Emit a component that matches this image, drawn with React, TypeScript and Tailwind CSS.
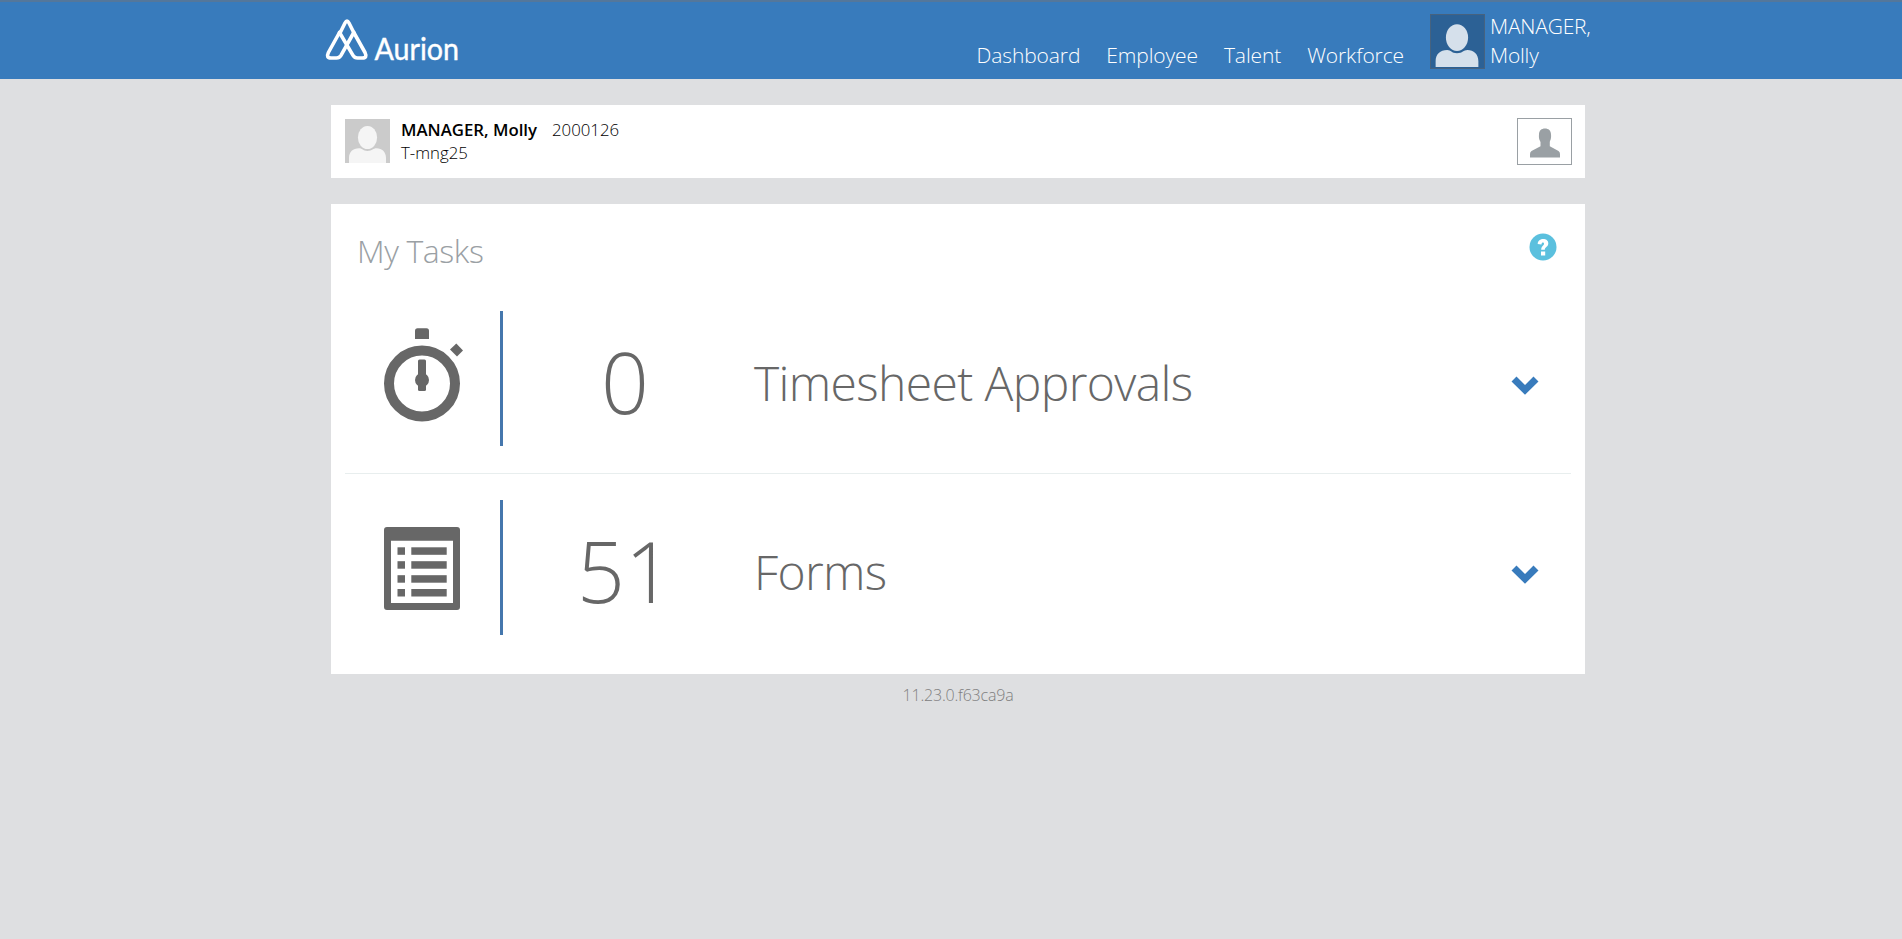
import type { ReactNode } from 'react';

function AurionLogo() {
  return (
    <svg width="142" height="58" viewBox="0 0 142 58" aria-label="Aurion">
      <g fill="none" stroke="#fff" strokeWidth="3.6" strokeLinejoin="round" strokeLinecap="round">
        <path d="M15.500 14 L20 5 Q22 1.200 24 5 L28.500 14" />
        <path d="M14.500 14.500 L3.400 34.500 Q0.800 40 6 40 H11.500 Q14.400 40 16 37.300 L28.800 14.500" />
        <path d="M28.800 14.500 L40 34.500 Q42.600 40 37.400 40 H32.500 Q29.600 40 28 37.300 L14.500 14.500" />
      </g>
      <text x="49.500" y="41.500" fill="#fff" stroke="#fff" strokeWidth="0.4" fontSize="31" textLength="84.500" lengthAdjust="spacingAndGlyphs" className="font-[Lato,sans-serif] font-normal tracking-normal">
        Aurion
      </text>
    </svg>
  );
}

function Silhouette({ size, fill }: { size: number; fill: string }) {
  return (
    <svg width={size} height={size} viewBox="0 0 45 45" fill={fill} className="shrink-0">
      <ellipse cx="22.500" cy="19.500" rx="9.600" ry="11.600" />
      <path d="M4 45 V40 C4 34 8 30.300 14 30.300 C17.500 30.300 17.500 33 22.500 33 S28 30.300 31.500 30.300 C37 30.300 41 34 41 40 V45 Z" />
    </svg>
  );
}

function StopwatchIcon() {
  return (
    <svg width="80" height="94" viewBox="0 0 80 94" fill="#676767">
      <path d="M31 11 V3 Q31 0.300 33.500 0.300 H42.500 Q45 0.300 45 3 V11 Z" />
      <circle cx="38" cy="55.500" r="33" fill="none" stroke="#676767" strokeWidth="10" />
      <rect x="34" y="31.500" width="8" height="31.500" rx="1.500" />
      <circle cx="38" cy="52" r="7" />
      <path d="M72.300 15.500 L79 22.500 L73 28.500 L66 21.500 Z" />
    </svg>
  );
}

function FormsIcon() {
  return (
    <svg width="80" height="83" viewBox="0 0 80 83" fill="#676767">
      <path fillRule="evenodd" d="M3 0 H73 Q76 0 76 3 V80 Q76 83 73 83 H3 Q0 83 0 80 V3 Q0 0 3 0 Z M7 13.700 V76 H69 V13.700 Z" />
      {[20.3, 34.2, 48.2, 62].map((y) => (
        <g key={y}>
          <rect x="13.500" y={y} width="7.500" height="7.500" />
          <rect x="27.300" y={y} width="35.400" height="7.500" />
        </g>
      ))}
    </svg>
  );
}

function Chevron() {
  return (
    <svg width="28" height="19" viewBox="0 0 28 19" fill="#387bbc">
      <path d="M0.500 5.500 L5.500 0.500 L14 9 L22.500 0.500 L27.500 5.500 L14 18.700 Z" />
    </svg>
  );
}

function TaskRow({ icon, count, label }: { icon: ReactNode; count: string; label: string }) {
  return (
    <div className="flex h-[135px] text-[#676767]">
      <div className="flex w-[158px] border-r-[3px] border-[#4577ad] pl-[39px]">{icon}</div>
      <div className="flex w-[244px] items-center justify-center text-[84px] leading-none">
        <span className="pt-[7px]">{count}</span>
      </div>
      <div className="flex flex-1 items-center pl-[7px] text-[48px] leading-none tracking-[-0.62px]">
        <span className="pt-[8px]">{label}</span>
      </div>
      <div className="w-[60px] pt-[65px]">
        <Chevron />
      </div>
    </div>
  );
}

export default function App() {
  return (
    <div className="min-h-screen bg-[#dedfe1] font-['Open_Sans',sans-serif] font-light">
      <header className="h-[79px] border-t-2 border-[#54779b] bg-[#387bbc] text-white">
        <div className="flex h-full pl-[325px] text-[21px] leading-[29px] tracking-[-0.2px]">
          <div className="pt-[16px]">
            <AurionLogo />
          </div>
          <nav className="ml-auto flex gap-[26px] pt-[39px] tracking-[-0.1px]">
            <a>Dashboard</a>
            <a>Employee</a>
            <a>Talent</a>
            <a>Workforce</a>
          </nav>
          <div className="ml-[26px] flex w-[472px] pt-[12px]">
            <div className="flex h-[55px] w-[55px] items-end border border-[#46627f] bg-[#2c6195] pb-px">
              <Silhouette size={52} fill="#d5e0eb" />
            </div>
            <div className="ml-[5px] -mt-0.5">
              MANAGER,
              <br />
              Molly
            </div>
          </div>
        </div>
      </header>

      <main className="ml-[331px] w-[1254px]">
        <section className="mt-[26px] flex h-[73px] bg-white pl-[14px] pr-[13px] pt-[13px] text-[16.800px] leading-[23px] text-black">
          <div className="mt-px flex h-[44px] w-[45px] items-end bg-[#cbcbcb]">
            <Silhouette size={45} fill="#f5f5f5" />
          </div>
          <div className="ml-[11px]">
            <div>
              <span className="font-semibold">MANAGER, Molly</span>
              <span className="ml-[15px]">2000126</span>
            </div>
            <div>T-mng25</div>
          </div>
          <div className="ml-auto h-[47px] w-[55px] border border-[#9aa0a4] pl-[12px] pt-[9px]">
            <svg width="30" height="30" viewBox="0 0 30 30" fill="#9aa0a4">
              <path d="M15 0.500 C18.500 0.500 21 2.500 21 6.500 C21.500 11 20 12.500 19.800 14 V18.300 L28.500 23 Q30 24 30 26 V29.500 H0 V26 Q0 24 1.500 23 L10.500 18.300 V14 C10 12.500 8.500 11 9 6.500 C9 2.500 11.500 0.500 15 0.500 Z" />
            </svg>
          </div>
        </section>

        <section className="mt-[26px] h-[470px] bg-white px-[14px]">
          <div className="flex h-[107px] justify-between pl-[12px] pr-[14px] pt-[29px]">
            <h1 className="-mt-px text-[32px] leading-[38px] tracking-[-0.4px] text-[#9aa0a4]">My Tasks</h1>
            <svg width="28" height="28" viewBox="0 0 28 28">
              <circle cx="14" cy="14" r="13.500" fill="#5bc0de" />
              <path d="M8.700 11 C8.700 4.500 19.300 4.500 19.300 10.200 C19.300 14 15.800 13.800 15.800 16.800 H12.200 C12.200 13 15 12.900 15 10.800 C15 9 12.600 9 12.500 11.400 Z" fill="#fff" />
              <rect x="12" y="18.500" width="4.200" height="4" fill="#fff" />
            </svg>
          </div>
          <TaskRow icon={<div className="pt-[17px]"><StopwatchIcon /></div>} count="0" label="Timesheet Approvals" />
          <hr className="mb-[26px] mt-[27px] border-[#e8eeee]" />
          <TaskRow icon={<div className="pt-[27px]"><FormsIcon /></div>} count="51" label="Forms" />
        </section>
        <footer className="pt-[10px] text-center text-[16px] leading-[23px] tracking-[-0.2px] text-[#808080]">11.23.0.f63ca9a</footer>
      </main>
    </div>
  );
}
